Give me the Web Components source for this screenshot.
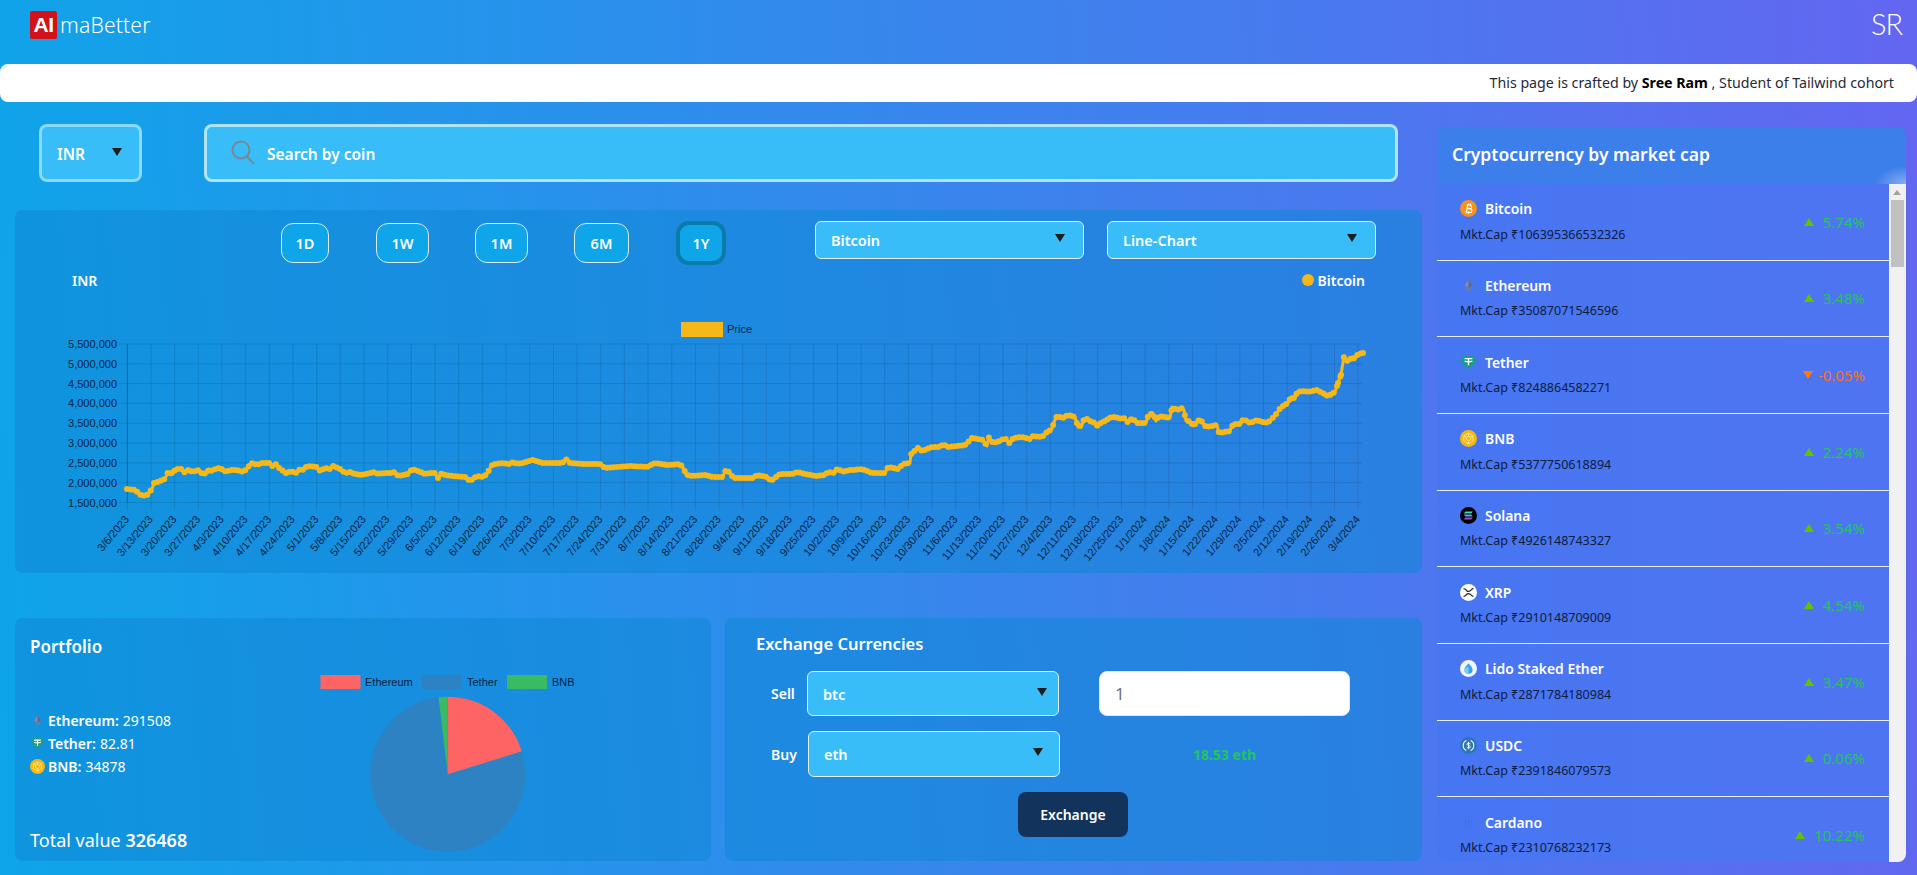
<!DOCTYPE html>
<html lang="en">
<head>
<meta charset="utf-8">
<title>AlmaBetter crypto dashboard</title>
<style>
  html, body { margin: 0; height: 875px; overflow: hidden; }
  body {
    font-family: "Noto Sans", "Open Sans", sans-serif;
    color: #fff;
    background: linear-gradient(86deg, #0ea5e9, #6366f1);
  }
</style>
</head>
<body>
<app-header></app-header>
<credit-bar>This page is crafted by <b>Sree Ram</b> , Student of Tailwind cohort</credit-bar>
<page-main>
  <currency-picker slot="controls"></currency-picker>
  <search-box slot="controls">Search by coin</search-box>
  <chart-card slot="left"></chart-card>
  <portfolio-card slot="bottom"></portfolio-card>
  <exchange-card slot="bottom"></exchange-card>
  <market-panel slot="right">
    <coin-row name="Bitcoin" icon="btc" cap="106395366532326" pct="5.74%"></coin-row>
    <coin-row name="Ethereum" icon="eth" cap="35087071546596" pct="3.48%"></coin-row>
    <coin-row name="Tether" icon="usdt" cap="8248864582271" pct="-0.05%" down></coin-row>
    <coin-row name="BNB" icon="bnb" cap="5377750618894" pct="2.24%"></coin-row>
    <coin-row name="Solana" icon="sol" cap="4926148743327" pct="3.54%"></coin-row>
    <coin-row name="XRP" icon="xrp" cap="2910148709009" pct="4.54%"></coin-row>
    <coin-row name="Lido Staked Ether" icon="lido" cap="2871784180984" pct="3.47%"></coin-row>
    <coin-row name="USDC" icon="usdc" cap="2391846079573" pct="0.06%"></coin-row>
    <coin-row name="Cardano" icon="ada" cap="2310768232173" pct="10.22%"></coin-row>
  </market-panel>
</page-main>

<script>
  const COIN_ICONS = {
    btc: `<circle cx="12" cy="12" r="12" fill="#f7931a"/><g transform="rotate(12 12 12)" fill="none" stroke="#fff" stroke-width="1.7"><path d="M8.5 7h5a2.4 2.4 0 0 1 0 4.9h-4m0 0h5.2a2.6 2.6 0 0 1 0 5.2H8.5M10 7v10M10.8 4.8V7M13.6 4.8V7M10.8 17v2.2M13.6 17v2.2"/></g>`,
    eth: `<path d="M12 3 6.5 12 12 15.2 17.5 12z" fill="#8289ad"/><path d="M12 3v12.200l5.500-3.200z" fill="#5f6690"/><path d="M6.500 13.300 12 21l5.500-7.700L12 16.500z" fill="#747ba3"/>`,
    usdt: `<path d="M5 2.500h14L24 9.500 12 21.500 0 9.500z" fill="#1b9c8e"/><path d="M6.500 6.500h11M12 6.500v9.500M6.500 10c3.500 1.200 7.500 1.200 11 0" fill="none" stroke="#fff" stroke-width="1.800"/>`,
    bnb: `<circle cx="12" cy="12" r="12" fill="#f4b90f"/><path d="M12 4.500 18.500 8.200v7.600L12 19.500 5.500 15.800V8.200zM12 8.500l3 1.800v3.400l-3 1.800-3-1.800v-3.400zM12 4.500v4M5.500 8.200l3.500 2.100M18.500 8.200 15 10.300M12 15.500v4" fill="none" stroke="#ffe9a0" stroke-width="1.200"/>`,
    sol: `<circle cx="12" cy="12" r="12" fill="#000"/><path d="M7.500 6.500h10.500l-2 2.700H5.500z" fill="#2fdcb4"/><path d="M5.500 10.700H16l2 2.600H7.500z" fill="#6f9fe0"/><path d="M7.500 14.800H18l-2 2.700H5.500z" fill="#9a4be8"/>`,
    xrp: `<circle cx="12" cy="12" r="12" fill="#fff"/><path d="M5 6.500c2.500 0 3.500 2 4.500 3s3.500 1 5 0 2-3 4.500-3M5 17.500c2.500 0 3.500-2 4.500-3s3.500-1 5 0 2 3 4.500 3" fill="none" stroke="#222" stroke-width="1.700"/>`,
    lido: `<circle cx="12" cy="12" r="12" fill="#f3f8ff"/><path d="M12 4.500c3 3.500 5.800 6 5.800 9.300A5.800 5.800 0 0 1 6.200 13.800c0-3.300 2.800-5.800 5.800-9.300z" fill="#38a5ea"/><path d="M12 9.500v10.100a5.800 5.800 0 0 1-5.800-5.800c0-.7.100-1.200.3-1.800z" fill="#7fcdf5"/>`,
    usdc: `<circle cx="12" cy="12" r="12" fill="#2a76b8"/><path d="M9 4.800a8 8 0 0 0 0 14.400M15 4.800a8 8 0 0 1 0 14.400" fill="none" stroke="#fff" stroke-width="1.500"/><path d="M14.800 9.800c-.5-1.200-4.800-1.800-5 .3-.2 2.300 5.100 1.400 5 3.800-.1 2.100-4.700 1.700-5.300.3M12 6.800v10.400" fill="none" stroke="#fff" stroke-width="1.300"/>`,
    ada: `<g fill="#3a68d8"><circle cx="12" cy="12" r="1.100"/><circle cx="12" cy="7.500" r=".9"/><circle cx="12" cy="16.500" r=".9"/><circle cx="7.800" cy="9.800" r=".9"/><circle cx="16.200" cy="9.800" r=".9"/><circle cx="7.800" cy="14.200" r=".9"/><circle cx="16.200" cy="14.200" r=".9"/><circle cx="12" cy="3" r=".7"/><circle cx="12" cy="21" r=".7"/><circle cx="4" cy="7.500" r=".7"/><circle cx="20" cy="7.500" r=".7"/><circle cx="4" cy="16.500" r=".7"/><circle cx="20" cy="16.500" r=".7"/></g>`
  };

  // traced from the reference, in page pixels
  const PRICE_LINE = "127,489 135,490 142,496 147,495 152,489 154,483 160,481 165,479 168,472 173,474 175,469 182,469 185,473 189,469 192,472 199,470 202,474 207,473 209,469 212,471 217,468 222,469 226,472 230,470 237,470 243,472 247,469 250,464 253,463 257,465 262,463 270,463 273,467 277,463 279,468 283,471 287,474 290,471 297,473 300,469 304,470 307,466 317,467 320,471 325,468 330,469 333,466 340,469 345,473 350,472 355,474 362,475 370,473 373,472 378,474 385,473 392,473 395,472 398,476 408,474 412,469 418,471 425,474 430,473 435,473 438,478 442,473 445,475 453,476 465,477 470,481 477,476 483,477 487,474 490,468 493,464 497,464 500,463 510,464 513,462 517,464 522,463 533,460 543,463 550,463 562,463 567,459 570,463 583,464 600,464 605,468 630,466 647,467 655,463 667,465 680,464 684,469 686,475 693,476 705,475 713,477 723,477 725,471 730,472 733,478 753,478 757,475 767,477 771,481 780,474 792,474 798,472 805,474 817,476 825,475 828,472 835,473 837,469 845,472 848,470 853,470 862,469 872,473 885,473 888,467 898,469 903,464 910,463 911,454 918,448 922,451 932,447 940,447 943,444 948,447 965,445 972,438 983,440 987,446 989,437 993,443 1000,441 1005,438 1010,444 1013,438 1022,437 1030,439 1033,436 1042,437 1047,432 1052,429 1054,422 1057,416 1063,418 1068,415 1075,417 1078,427 1082,425 1084,419 1088,419 1092,423 1095,422 1098,427 1102,421 1106,422 1108,418 1115,417 1122,419 1125,418 1128,423 1132,418 1137,423 1146,423 1148,416 1153,413 1156,421 1159,416 1170,418 1172,407 1177,410 1182,408 1184,410 1186,421 1190,421 1193,426 1200,419 1206,427 1217,425 1219,433 1230,431 1233,424 1241,424 1243,419 1250,423 1257,420 1265,423 1270,421 1277,413 1281,407 1288,403 1291,397 1295,399 1297,392 1305,391 1308,392 1312,391 1317,390 1328,396 1335,392 1338,383 1341,375 1344,356 1348,362 1352,357 1355,359 1358,354 1363,353";

  // one dot per day on top of the line, the way the chart draws its points
  function dailyDots(points) {
    const pts = points.split(" ").map(p => p.split(",").map(Number));
    let d = "", seg = 0;
    for (let x = pts[0][0]; x <= pts[pts.length - 1][0]; x += 3.38) {
      while (seg < pts.length - 2 && pts[seg + 1][0] < x) seg++;
      const [x0, y0] = pts[seg], [x1, y1] = pts[seg + 1];
      const y = y0 + (y1 - y0) * (x - x0) / (x1 - x0);
      d += `M${x.toFixed(1)} ${y.toFixed(1)}h0`;
    }
    return d + "M1363 353h0M1341 375h0M1338 383h0";
  }

  class AppHeader extends HTMLElement {
    constructor() {
      super();
      this.attachShadow({ mode: "open" });
      this.shadowRoot.innerHTML = `
        <style>
          :host { display: flex; height: 64px; box-sizing: border-box; padding: 11px 15px 0 30px; justify-content: space-between; align-items: flex-start; }
          .logo { display: flex; align-items: center; height: 28px; font-size: 21px; font-weight: 300; letter-spacing: .2px; }
          .mark { width: 27px; height: 28px; margin-right: 3px; border-radius: 2px; background: #d1121a; color: #fff; font: 700 21px/28px "Liberation Sans", sans-serif; text-align: center; letter-spacing: -.5px; }
          .sr { font: 300 29px/25px Lato, sans-serif; letter-spacing: -1px; }
        </style>
        <div class="logo"><span class="mark">AI</span>maBetter</div>
        <div class="sr">SR</div>
      `;
    }
  }

  class CreditBar extends HTMLElement {
    constructor() {
      super();
      this.attachShadow({ mode: "open" });
      this.shadowRoot.innerHTML = `
        <style>
          :host { display: block; height: 38px; box-sizing: border-box; padding-right: 23px; border-radius: 8px; background: #fff; color: #1f2937; font-size: 14.2px; line-height: 38px; text-align: right; }
          ::slotted(b) { color: #000; font-weight: 700; }
        </style>
        <slot></slot>
      `;
    }
  }

  class PageMain extends HTMLElement {
    constructor() {
      super();
      this.attachShadow({ mode: "open" });
      this.shadowRoot.innerHTML = `
        <style>
          :host { display: grid; grid-template-columns: 1407px 469px; column-gap: 15px; padding: 22px 11px 0 15px; }
          .controls { display: flex; gap: 62px; height: 58px; padding: 0 24px; margin-bottom: 28px; }
          .bottom { display: grid; grid-template-columns: 696px 697px; column-gap: 14px; margin-top: 45px; }
          .right { padding-top: 3px; }
        </style>
        <div class="left">
          <div class="controls"><slot name="controls"></slot></div>
          <slot name="left"></slot>
          <div class="bottom"><slot name="bottom"></slot></div>
        </div>
        <div class="right"><slot name="right"></slot></div>
      `;
    }
  }

  class DropSelect extends HTMLElement {
    constructor() {
      super();
      this.attachShadow({ mode: "open" });
      this.shadowRoot.innerHTML = `
        <style>
          :host { display: flex; box-sizing: border-box; align-items: center; justify-content: space-between; padding: 0 var(--arrow-gap, 18px) 0 15px; border: 1px solid #e3effa; border-radius: 6px; background: #38bdf8; color: #fff; font-size: 14.5px; font-weight: 600; }
          i { width: 0; height: 0; border: 5.5px solid transparent; border-top: 8px solid #1d1d1d; border-bottom: 0; margin-top: -4px; }
        </style>
        <slot></slot><i></i>
      `;
    }
  }

  class CurrencyPicker extends HTMLElement {
    constructor() {
      super();
      this.attachShadow({ mode: "open" });
      this.shadowRoot.innerHTML = `
        <style>
          :host { display: flex; box-sizing: border-box; width: 103px; height: 58px; align-items: center; justify-content: space-between; padding: 0 17px 0 15px; border: 3px solid rgba(255,255,255,.42); border-radius: 8px; background: #38bdf8; font-size: 15.5px; font-weight: 600; }
          span { padding-top: 2px; }
          i { width: 0; height: 0; border: 5.5px solid transparent; border-top: 8px solid #1d1d1d; border-bottom: 0; margin-top: -3px; }
        </style>
        <span>INR</span><i></i>
      `;
    }
  }

  class SearchBox extends HTMLElement {
    constructor() {
      super();
      this.attachShadow({ mode: "open" });
      this.shadowRoot.innerHTML = `
        <style>
          :host { display: flex; flex: 1; box-sizing: border-box; height: 58px; align-items: center; gap: 12px; padding: 0 24px; border: 3px solid rgba(255,255,255,.6); border-radius: 8px; background: #38bdf8; font-size: 15.5px; font-weight: 600; }
          span { padding-top: 2px; }
          svg { width: 24px; height: 24px; margin-top: -2px; }
        </style>
        <svg viewBox="0 0 24 24" fill="none" stroke="#7d8791" stroke-width="2"><circle cx="10" cy="10" r="8.500"/><path d="M16 16.500 23 24"/></svg>
        <span><slot></slot></span>
      `;
    }
  }

  class RangeButton extends HTMLElement {
    constructor() {
      super();
      this.attachShadow({ mode: "open" });
      this.shadowRoot.innerHTML = `
        <style>
          :host { display: flex; box-sizing: border-box; height: 40px; margin-top: 2px; align-items: center; justify-content: center; border: 1px solid #dbeafe; border-radius: 12px; background: #0ea5e9; font-size: 14.5px; font-weight: 600; }
          :host([active]) { height: 44px; margin-top: 0; border: 4px solid #0b7bab; border-radius: 13px; }
        </style>
        <slot></slot>
      `;
    }
  }

  class PriceChart extends HTMLElement {
    constructor() {
      super();
      this.attachShadow({ mode: "open" });
      this.render();
    }
    render() {
      const top = 344, bottom = 502.500, left = 127.300, right = 1362, step = 23.670;
      let grid = "", yLabels = "", xLabels = "";
      for (let i = 0; i <= 8; i++) {
        const y = top + (bottom - top) * i / 8;
        const value = (5500000 - i * 500000).toLocaleString("en-US");
        grid += `<line x1="119" x2="${right}" y1="${y}" y2="${y}"/>`;
        yLabels += `<text x="117" y="${y + 4}" text-anchor="end">${value}</text>`;
      }
      for (let i = 0; i <= 52; i++) {
        const x = left + step * i;
        const d = new Date(Date.UTC(2023, 2, 6 + i * 7));
        const label = `${d.getUTCMonth() + 1}/${d.getUTCDate()}/${d.getUTCFullYear()}`;
        grid += `<line x1="${x}" x2="${x}" y1="${top}" y2="${bottom + 8}"/>`;
        xLabels += `<text transform="translate(${x + 2.500} 519.500) rotate(-50)" text-anchor="end">${label}</text>`;
      }
      this.shadowRoot.innerHTML = `
        <style>
          :host { display: block; height: 283px; }
          svg { display: block; width: 1407px; height: 283px; }
          text { font: 11px "Liberation Sans", Arial, sans-serif; fill: #082445; }
          .grid line { stroke: rgba(0,0,0,.11); stroke-width: 1; }
        </style>
        <svg viewBox="15 290 1407 283">
          <rect x="681" y="322" width="42" height="15" fill="#f5b818"/>
          <text x="727" y="333">Price</text>
          <g class="grid">${grid}</g>
          <line x1="${left}" x2="${left}" y1="${top}" y2="${bottom}" stroke="rgba(0,0,0,.22)"/>
          <g>${yLabels}${xLabels}</g>
          <polyline points="${PRICE_LINE}" fill="none" stroke="#f5b818" stroke-width="3" stroke-linejoin="round"/>
          <path d="${dailyDots(PRICE_LINE)}" fill="none" stroke="#f5b818" stroke-width="6" stroke-linecap="round"/>
        </svg>
      `;
    }
  }

  class ChartCard extends HTMLElement {
    constructor() {
      super();
      this.attachShadow({ mode: "open" });
      this.shadowRoot.innerHTML = `
        <style>
          :host { display: block; height: 363px; box-sizing: border-box; padding-top: 11px; border-radius: 8px; background: rgba(16,136,214,.56); }
          .tools { display: flex; height: 44px; padding-left: 266px; }
          range-button { width: 53px; margin-right: 46px; }
          .w48 { width: 48px; margin-right: 47px; }
          .w55 { width: 55px; margin-right: 47px; }
          .w50 { width: 50px; margin-right: 89px; }
          drop-select { width: 269px; height: 38px; margin-right: 23px; }
          .legend { display: flex; height: 25px; justify-content: space-between; align-items: center; padding: 5px 57px 0 57px; box-sizing: border-box; font-size: 14px; font-weight: 600; }
          .legend span { display: flex; align-items: center; gap: 4px; }
          .legend i { width: 12px; height: 12px; border-radius: 50%; background: #f5b818; }
        </style>
        <div class="tools">
          <range-button class="w48">1D</range-button>
          <range-button>1W</range-button>
          <range-button>1M</range-button>
          <range-button class="w55">6M</range-button>
          <range-button class="w50" active>1Y</range-button>
          <drop-select>Bitcoin</drop-select>
          <drop-select>Line-Chart</drop-select>
        </div>
        <div class="legend"><div>INR</div><span><i></i>Bitcoin</span></div>
        <price-chart></price-chart>
      `;
    }
  }

  class CoinIcon extends HTMLElement {
    constructor() {
      super();
      this.attachShadow({ mode: "open" });
    }
    connectedCallback() {
      this.shadowRoot.innerHTML = `
        <style>
          :host { display: inline-flex; width: 17px; height: 17px; flex: none; }
          svg { width: 100%; height: 100%; }
        </style>
        <svg viewBox="0 0 24 24">${COIN_ICONS[this.getAttribute("kind")] || ""}</svg>
      `;
    }
  }

  class PortfolioCard extends HTMLElement {
    constructor() {
      super();
      this.attachShadow({ mode: "open" });
      this.shadowRoot.innerHTML = `
        <style>
          :host { display: flex; height: 243px; box-sizing: border-box; border-radius: 8px; background: rgba(16,136,214,.56); }
          .info { width: 290px; box-sizing: border-box; padding: 15px 0 0 15px; }
          h2 { margin: 0; font-size: 17px; line-height: 28px; font-weight: 600; }
          ul { list-style: none; margin: 48px 0 0; padding: 0; font-size: 14px; }
          li { display: flex; align-items: center; gap: 3px; height: 23px; }
          li b { font-weight: 600; margin-right: 4px; }
          coin-icon { width: 15px; height: 15px; }
          .total { margin-top: 48px; font-size: 18px; line-height: 28px; }
          .total b { font-weight: 600; }
          svg { display: block; margin-top: 47px; width: 300px; height: 195px; }
          text { font: 11px "Liberation Sans", Arial, sans-serif; fill: #082445; }
        </style>
        <div class="info">
          <h2>Portfolio</h2>
          <ul>
            <li><coin-icon kind="eth"></coin-icon><span><b>Ethereum:</b>291508</span></li>
            <li><coin-icon kind="usdt"></coin-icon><span><b>Tether:</b>82.81</span></li>
            <li><coin-icon kind="bnb"></coin-icon><span><b>BNB:</b>34878</span></li>
          </ul>
          <div class="total">Total value <b>326468</b></div>
        </div>
        <svg viewBox="305 665 300 195">
          <rect x="320.500" y="675" width="40" height="14" fill="#ff6464"/>
          <text x="365" y="686">Ethereum</text>
          <rect x="422" y="675" width="40" height="14" fill="#2d82c4"/>
          <text x="467" y="686">Tether</text>
          <rect x="507" y="675" width="40" height="14" fill="#38bb62"/>
          <text x="552" y="686">BNB</text>
          <circle cx="447.700" cy="774.300" r="77.600" fill="#2d82c4"/>
          <path d="M447.700 774.300V696.700A77.600 77.600 0 0 1 521.800 751.300z" fill="#ff6464"/>
          <path d="M447.700 774.300 438.500 697.300A77.600 77.600 0 0 1 447.700 696.700z" fill="#38bb62"/>
        </svg>
      `;
    }
  }

  class ExchangeCard extends HTMLElement {
    constructor() {
      super();
      this.attachShadow({ mode: "open" });
      this.shadowRoot.innerHTML = `
        <style>
          :host { display: block; height: 243px; box-sizing: border-box; padding: 12px 0 0 31px; border-radius: 8px; background: rgba(16,136,214,.56); }
          h2 { margin: 0 0 13px; font-size: 16.5px; line-height: 28px; font-weight: 600; }
          .row { display: flex; align-items: center; font-size: 14px; font-weight: 600; }
          .sell { height: 45px; margin-bottom: 15px; }
          .buy { height: 46px; margin-bottom: 15px; }
          label { width: 36px; margin-left: 15px; box-sizing: border-box; }
          .buy label { width: 37px; }
          drop-select { width: 252px; height: 100%; }
          .sell drop-select { --arrow-gap: 11px; }
          .buy drop-select { --arrow-gap: 16px; }
          .amount { box-sizing: border-box; width: 251px; height: 100%; margin-left: 40px; padding-left: 15px; border: 1px solid #e5e7eb; border-radius: 8px; background: #fff; color: #6b7280; font-size: 17px; font-weight: 400; line-height: 43px; }
          .result { width: 251px; margin-left: 39px; color: #22c55e; text-align: center; font-weight: 700; }
          button { display: block; width: 110px; height: 45px; margin-left: 262px; border: 0; border-radius: 8px; background: #12335c; color: #fff; font: 600 14px "Noto Sans", sans-serif; }
        </style>
        <h2>Exchange Currencies</h2>
        <div class="row sell"><label>Sell</label><drop-select>btc</drop-select><div class="amount">1</div></div>
        <div class="row buy"><label>Buy</label><drop-select>eth</drop-select><div class="result">18.53 eth</div></div>
        <button>Exchange</button>
      `;
    }
  }

  class MarketPanel extends HTMLElement {
    constructor() {
      super();
      this.attachShadow({ mode: "open" });
      this.shadowRoot.innerHTML = `
        <style>
          :host { display: flex; flex-direction: column; height: 734.500px; overflow: hidden; border-radius: 8px; }
          header { flex: none; height: 57px; padding-left: 15px; background: radial-gradient(ellipse 32px 18px at 100% 100%, rgba(255,255,255,.38), transparent), #3c7eea; font-size: 17.500px; font-weight: 600; line-height: 55px; }
          .body { flex: 1; display: flex; min-height: 0; }
          .list { flex: 1; overflow: hidden; background: linear-gradient(to right, #4776f2, #4f74f1); }
          .track { flex: none; position: relative; width: 17px; background: #f1f1f1; }
          .track::before { content: ""; position: absolute; left: 4px; top: 6px; border: 4.500px solid transparent; border-top: 0; border-bottom: 5px solid #a3a3a3; }
          .track::after { content: ""; position: absolute; left: 2px; top: 16px; width: 13px; height: 67px; background: #c1c1c1; }
        </style>
        <header>Cryptocurrency by market cap</header>
        <div class="body">
          <div class="list"><slot></slot></div>
          <div class="track"></div>
        </div>
      `;
    }
  }

  class CoinRow extends HTMLElement {
    constructor() {
      super();
      this.attachShadow({ mode: "open" });
    }
    connectedCallback() {
      const down = this.hasAttribute("down");
      this.shadowRoot.innerHTML = `
        <style>
          :host { display: flex; box-sizing: border-box; height: 76.670px; padding: 0 24px 0 23px; align-items: center; justify-content: space-between; border-bottom: 1.500px solid #e8eefc; }
          .name { display: flex; align-items: center; gap: 8px; height: 24px; font-size: 13.900px; font-weight: 600; }
          .cap { height: 25px; padding-top: 1px; color: #0d1c3d; font-size: 12.500px; line-height: 25px; }
          .pct { display: flex; align-items: center; gap: ${down ? 5 : 9}px; color: ${down ? "#f97316" : "#22c55e"}; font-size: 15px; }
          .pct i { width: 0; height: 0; border: 5.500px solid transparent; ${down ? "border-top: 8px solid #ff7a00; border-bottom: 0;" : "border-bottom: 8px solid #66c100; border-top: 0;"} }
        </style>
        <div>
          <div class="name"><coin-icon kind="${this.getAttribute("icon")}"></coin-icon><span>${this.getAttribute("name")}</span></div>
          <div class="cap">Mkt.Cap ₹${this.getAttribute("cap")}</div>
        </div>
        <div class="pct"><i></i><span>${this.getAttribute("pct")}</span></div>
      `;
    }
  }

  customElements.define("coin-icon", CoinIcon);
  customElements.define("app-header", AppHeader);
  customElements.define("credit-bar", CreditBar);
  customElements.define("page-main", PageMain);
  customElements.define("drop-select", DropSelect);
  customElements.define("currency-picker", CurrencyPicker);
  customElements.define("search-box", SearchBox);
  customElements.define("range-button", RangeButton);
  customElements.define("price-chart", PriceChart);
  customElements.define("chart-card", ChartCard);
  customElements.define("portfolio-card", PortfolioCard);
  customElements.define("exchange-card", ExchangeCard);
  customElements.define("market-panel", MarketPanel);
  customElements.define("coin-row", CoinRow);
</script>
</body>
</html>
